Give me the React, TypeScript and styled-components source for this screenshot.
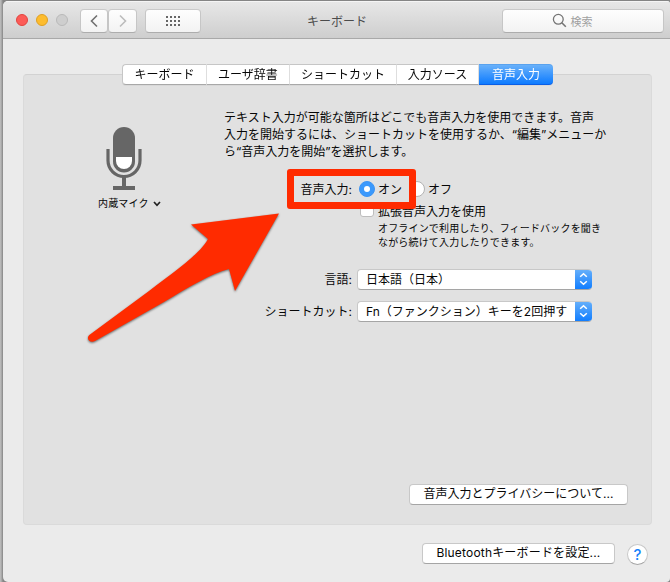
import React from "react";
import styled, { createGlobalStyle, css } from "styled-components";

const GlobalStyle = createGlobalStyle`
  * { box-sizing: border-box; }
  html, body { margin: 0; padding: 0; }
  body {
    width: 670px;
    height: 582px;
    overflow: hidden;
    background: #b4b4b4;
    font-family: Inter, "Noto Sans CJK JP", sans-serif;
    font-size: 12px;
    color: #060606;
  }
`;

const Desktop = styled.div`
  position: relative;
  width: 670px;
  height: 582px;
  padding: 1px 0 0 3px;
  background: linear-gradient(90deg, #bdbdbd 0, #b4b4b4 1px, #858585 3px);
`;

const Window = styled.div`
  display: flex;
  flex-direction: column;
  height: 581px;
  background: #ebebeb;
  border-radius: 5px 3px 4px 5px;
  overflow: hidden;
`;

const TitleBar = styled.header`
  display: flex;
  align-items: flex-start;
  flex: none;
  height: 38px;
  padding: 7px 6px 0 13px;
  background: linear-gradient(#e7e7e7, #cecece);
  border-top: 1px solid #f5f5f5;
  border-bottom: 1px solid #a9a9a9;
`;

const Lights = styled.div`
  display: flex;
  gap: 8px;
  width: 64px;
  padding-top: 5px;
`;

const Light = styled.span<{ $fill: string; $edge: string }>`
  width: 12px;
  height: 12px;
  border-radius: 50%;
  background: ${(p) => p.$fill};
  border: 1px solid ${(p) => p.$edge};
`;

const raised = css`
  background: #fff;
  border: 1px solid #c8c8c8;
  border-bottom-color: #a5a5a5;
  border-radius: 4px;
`;

const ToolButton = styled.div<{ $width: number }>`
  ${raised}
  display: flex;
  align-items: center;
  justify-content: center;
  width: ${(p) => p.$width}px;
  height: 24px;
  background: linear-gradient(#fefefe, #f3f3f3);
  border-color: #cacaca #c6c6c6 #adadad;
`;

const NavButtons = styled.div`
  display: flex;
  margin-right: 8px;
`;

const Title = styled.h1`
  flex: 1;
  margin: 3px 0 0 106px;
  font-size: 12px;
  font-weight: 400;
  line-height: 20px;
  color: #4b4b4b;
`;

const SearchBox = styled(ToolButton)`
  gap: 4px;
  padding-right: 22px;
  color: #a0a0a0;
  font-size: 11px;
  svg { margin-top: -1px; }
`;

const Body = styled.main`
  display: flex;
  flex-direction: column;
  flex: 1;
  padding: 25px 19px 0 20px;
`;

const Tabs = styled.nav`
  z-index: 1;
  display: flex;
  width: 431px;
  height: 21px;
  margin-left: 99px;
  filter: drop-shadow(0 1px 0 rgba(0, 0, 0, 0.04));
`;

const Tab = styled.div<{ $width: number; $active?: boolean }>`
  width: ${(p) => p.$width}px;
  height: 21px;
  line-height: 19px;
  text-align: center;
  background: #fff;
  border: solid #c6c6c6;
  border-width: 1px 1px 1px 0;
  border-right-color: #dedede;
  border-bottom-color: #a8a8a8;
  &:first-child { border-left: 1px solid #c6c6c6; border-radius: 4px 0 0 4px; }
  &:last-child { border-radius: 0 4px 4px 0; }
  ${(p) =>
    p.$active &&
    css`
      color: #fff;
      background: linear-gradient(#69b1fa, #0d7bff);
      border-width: 1px 0;
      border-color: #59a2ee transparent #0a5ee6;
    `}
`;

const Panel = styled.section`
  display: flex;
  align-items: flex-start;
  width: 629px;
  height: 451px;
  margin-top: -11px;
  padding-top: 34px;
  background: #e1e1e1;
  border: 1px solid #dadada;
  border-top-color: #d2d2d2;
  border-radius: 4px;
`;

const Microphone = styled.div`
  width: 200px;
  padding: 18px 0 0 74px;
  font-size: 10px;
  svg { display: block; }
`;

const MicIcon = styled.svg`
  margin-left: 8px;
`;

const MicLabel = styled.div`
  display: flex;
  align-items: center;
  gap: 4px;
  margin-top: 3px;
  line-height: 19px;
  letter-spacing: 0.15px;
`;

const Settings = styled.div`
  display: flex;
  flex-direction: column;
  align-items: flex-start;
  height: 396px;
  width: 410px;
`;

const Description = styled.p`
  margin: 0;
  line-height: 17px;
  white-space: nowrap;
`;

const Row = styled.div<{ $top: number }>`
  display: flex;
  align-items: center;
  height: 22px;
  margin-top: ${(p) => p.$top}px;
  white-space: nowrap;
`;

const Label = styled.div`
  width: 128px;
  margin-right: 5px;
  padding-bottom: 2px;
  text-align: right;
`;

const Radio = styled.span<{ $on?: boolean }>`
  display: flex;
  align-items: center;
  justify-content: center;
  width: 16px;
  height: 16px;
  margin-left: ${(p) => (p.$on ? 2 : 0)}px;
  border-radius: 50%;
  background: ${(p) => (p.$on ? "#3b99fc" : "#fff")};
  border: 1px solid ${(p) => (p.$on ? "#3b94f5" : "#b3b3b3")};
  &::after {
    content: "";
    width: 6px;
    height: 6px;
    border-radius: 50%;
    background: #fff;
  }
`;

const RadioText = styled.span<{ $gap: number }>`
  margin: 0 ${(p) => p.$gap}px 0 3px;
  padding-bottom: 1px;
`;

const CheckRow = styled.div`
  display: flex;
  align-items: center;
  gap: 4px;
  height: 18px;
  margin: 1px 0 2px 136px;
`;

const Checkbox = styled.span`
  ${raised}
  width: 14px;
  height: 14px;
  border-color: #bdbdbd;
  border-radius: 3px;
`;

const Hint = styled.p`
  margin: 0 0 0 154px;
  font-size: 10px;
  line-height: 14px;
  letter-spacing: 0.17px;
  white-space: nowrap;
`;

const Select = styled.div`
  ${raised}
  display: flex;
  width: 235px;
  height: 21px;
  padding-left: 8px;
  line-height: 19px;
  border-right: 0;
  overflow: hidden;
`;

const SelectValue = styled.span`
  flex: 1;
`;

const Stepper = styled.span`
  display: flex;
  align-items: center;
  justify-content: center;
  width: 17px;
  height: 21px;
  margin-top: -1px;
  background: linear-gradient(#69b1fa, #0d7bff);
`;

const Button = styled.div<{ $width: number; $tracking?: number }>`
  ${raised}
  width: ${(p) => p.$width}px;
  height: 21px;
  line-height: 18px;
  letter-spacing: ${(p) => p.$tracking ?? 0}px;
  text-align: center;
  white-space: nowrap;
`;

const PrivacyButton = styled(Button)`
  margin: auto 0 0 185px;
`;

const Footer = styled.footer`
  display: flex;
  align-items: flex-start;
  justify-content: flex-end;
  gap: 12px;
  margin-top: 18px;
  padding-right: 3px;
`;

const Help = styled.div`
  ${raised}
  width: 21px;
  height: 21px;
  margin-top: 1px;
  border-radius: 50%;
  color: #1682fb;
  font-size: 15px;
  font-weight: 500;
  line-height: 19px;
  text-align: center;
`;

const Highlight = styled.div`
  position: absolute;
  z-index: 2;
  left: 287px;
  top: 169px;
  width: 129px;
  height: 40px;
  border: 7px solid #ff2b00;
  border-radius: 3px;
`;

const Arrow = styled.svg`
  position: absolute;
  z-index: 2;
  left: 80px;
  top: 200px;
  filter: drop-shadow(0 1px 1.2px rgba(0, 0, 0, 0.55));
`;

const tabs = [
  { label: "キーボード", width: 85 },
  { label: "ユーザ辞書", width: 83 },
  { label: "ショートカット", width: 107 },
  { label: "入力ソース", width: 82 },
  { label: "音声入力", width: 74 },
];

const dots = [0, 1, 2].flatMap((y) => [0, 1, 2, 3].map((x) => ({ x: x * 4, y: y * 4 })));

const Chevron = ({ flip }: { flip?: boolean }) => (
  <svg width="10" height="14" viewBox="0 0 10 14" fill="none">
    <path
      d={flip ? "M2 1.5 7.5 7 2 12.5" : "M8 1.5 2.5 7 8 12.5"}
      stroke={flip ? "#bcbcbc" : "#707070"}
      strokeWidth="1.6"
    />
  </svg>
);

const StepperArrows = () => (
  <Stepper>
    <svg width="9" height="14" viewBox="0 0 9 14" fill="none">
      <path d="M1.2 4.8 4.5 1.7 7.8 4.8M1.2 9.2 4.5 12.3 7.8 9.2" stroke="#fff" strokeWidth="1.5" />
    </svg>
  </Stepper>
);

export default function App() {
  return (
    <>
      <GlobalStyle />
      <Desktop>
        <Window>
          <TitleBar>
            <Lights>
              <Light $fill="#fc5b57" $edge="#e2443f" />
              <Light $fill="#fdbc2e" $edge="#dfa023" />
              <Light $fill="#cecece" $edge="#b9b9b9" />
            </Lights>
            <NavButtons>
              <ToolButton $width={28}><Chevron /></ToolButton>
              <ToolButton $width={29}><Chevron flip /></ToolButton>
            </NavButtons>
            <ToolButton $width={56}>
              <svg width="14" height="10" fill="#666">
                {dots.map((d) => <rect key={`${d.x}-${d.y}`} x={d.x} y={d.y} width="2" height="2" />)}
              </svg>
            </ToolButton>
            <Title>キーボード</Title>
            <SearchBox $width={162}>
              <svg width="15" height="15" viewBox="0 0 15 15" fill="none" stroke="#747474" strokeWidth="1.3">
                <circle cx="6.3" cy="6.3" r="4.9" />
                <path d="M9.8 9.8 13.8 13.8" strokeWidth="1.6" />
              </svg>
              検索
            </SearchBox>
          </TitleBar>
          <Body>
            <Tabs>
              {tabs.map((t, i) => (
                <Tab key={t.label} $width={t.width} $active={i === 4}>{t.label}</Tab>
              ))}
            </Tabs>
            <Panel>
              <Microphone>
                <MicIcon width="36" height="64" viewBox="0 0 36 64">
                  <rect x="7" y="0" width="22" height="45.5" rx="11" fill="#666" />
                  <path d="M10 30H26V34A8 8 0 0 1 10 34Z" fill="#fff" />
                  <path d="M2 22V33.5A16 16 0 0 0 34 33.5V22" fill="none" stroke="#666" strokeWidth="3.2" />
                  <path d="M18 49V60" stroke="#666" strokeWidth="4" />
                  <path d="M7 61H29" stroke="#666" strokeWidth="4" />
                </MicIcon>
                <MicLabel>
                  内蔵マイク
                  <svg width="8" height="6" viewBox="0 0 8 6" fill="none">
                    <path d="M1 1 4 4.3 7 1" stroke="#222" strokeWidth="1.7" />
                  </svg>
                </MicLabel>
              </Microphone>
              <Settings>
                <Description>
                  テキスト入力が可能な箇所はどこでも音声入力を使用できます。音声<br />
                  入力を開始するには、ショートカットを使用するか、“編集”メニューか<br />
                  ら“音声入力を開始”を選択します。
                </Description>
                <Row $top={18}>
                  <Label>音声入力:</Label>
                  <Radio $on />
                  <RadioText $gap={7}>オン</RadioText>
                  <Radio />
                  <RadioText $gap={0}>オフ</RadioText>
                </Row>
                <CheckRow><Checkbox />拡張音声入力を使用</CheckRow>
                <Hint>
                  オフラインで利用したり、フィードバックを聞き<br />
                  ながら続けて入力したりできます。
                </Hint>
                <Row $top={19}>
                  <Label>言語:</Label>
                  <Select><SelectValue>日本語（日本）</SelectValue><StepperArrows /></Select>
                </Row>
                <Row $top={10}>
                  <Label>ショートカット:</Label>
                  <Select><SelectValue>Fn（ファンクション）キーを2回押す</SelectValue><StepperArrows /></Select>
                </Row>
                <PrivacyButton $width={219}>音声入力とプライバシーについて...</PrivacyButton>
              </Settings>
            </Panel>
            <Footer>
              <Button $width={193} $tracking={0.18}>Bluetoothキーボードを設定...</Button>
              <Help>?</Help>
            </Footer>
          </Body>
        </Window>
        <Highlight />
        <Arrow width="210" height="150" viewBox="0 0 210 150">
          <path
            d="M199 13.5 155 91 149 69C132 73 109 87 84 102L15 141C10 144 5 138 10 134.5L69 91C95 71 120 54 128 39L111 24.5Z"
            fill="#ff2b00"
          />
        </Arrow>
      </Desktop>
    </>
  );
}
